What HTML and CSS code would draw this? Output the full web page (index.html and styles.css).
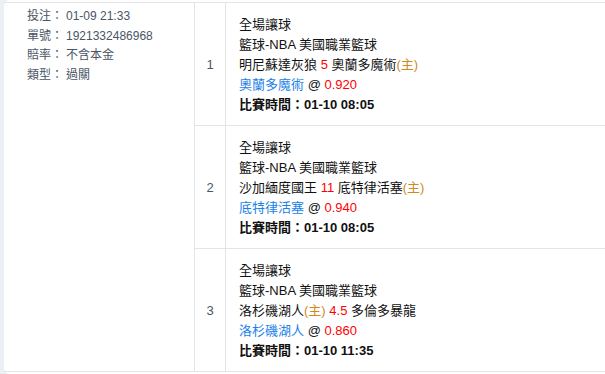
FILE: index.html
```html
<!DOCTYPE html>
<html lang="zh-Hant">
<head>
<meta charset="utf-8">
<link rel="stylesheet" href="styles.css">
</head>
<body>
<div class="page">
  <div class="card">
    <div class="grid">
      <div class="info">
        <div class="info-line"><span class="lbl">投注：</span>01-09 21:33</div>
        <div class="info-line"><span class="lbl">單號：</span>1921332486968</div>
        <div class="info-line"><span class="lbl">賠率：</span>不含本金</div>
        <div class="info-line"><span class="lbl">類型：</span>過關</div>
      </div>
      <div class="bets">
        <div class="bet">
          <div class="num">1</div>
          <div class="detail">
            <div class="line">全場讓球</div>
            <div class="line">籃球-NBA 美國職業籃球</div>
            <div class="line">明尼蘇達灰狼 <span class="red">5</span> 奧蘭多魔術<span class="home">(主)</span></div>
            <div class="line"><span class="blue">奧蘭多魔術</span> @ <span class="red">0.920</span></div>
            <div class="line bold">比賽時間：01-10 08:05</div>
          </div>
        </div>
        <div class="bet">
          <div class="num">2</div>
          <div class="detail">
            <div class="line">全場讓球</div>
            <div class="line">籃球-NBA 美國職業籃球</div>
            <div class="line">沙加緬度國王 <span class="red">11</span> 底特律活塞<span class="home">(主)</span></div>
            <div class="line"><span class="blue">底特律活塞</span> @ <span class="red">0.940</span></div>
            <div class="line bold">比賽時間：01-10 08:05</div>
          </div>
        </div>
        <div class="bet">
          <div class="num">3</div>
          <div class="detail">
            <div class="line">全場讓球</div>
            <div class="line">籃球-NBA 美國職業籃球</div>
            <div class="line">洛杉磯湖人<span class="home">(主)</span> <span class="red">4.5</span> 多倫多暴龍</div>
            <div class="line"><span class="blue">洛杉磯湖人</span> @ <span class="red">0.860</span></div>
            <div class="line bold">比賽時間：01-10 11:35</div>
          </div>
        </div>
      </div>
    </div>
  </div>
</div>
</body>
</html>
```

FILE: styles.css
```css
html, body {
  margin: 0;
  padding: 0;
  background: #ffffff;
}

body {
  font-family: "Liberation Sans", "Noto Sans CJK TC", sans-serif;
  font-size: 13px;
  color: #111;
}

.page {
  width: 605px;
  height: 374px;
  background: #eceff3;
  padding-left: 4px;
  box-sizing: border-box;
  display: flex;
  overflow: hidden;
}

.card {
  flex: 1;
  background: #fff;
  border-radius: 6px 0 0 6px;
  padding-top: 2px;
}

.grid {
  display: flex;
  border-top: 1px solid #e4e4ea;
  border-bottom: 1px solid #e4e4ea;
}

.info {
  border-right: 1px solid #e4e4e4;
  padding: 4px 0 0 23px;
  width: 167px;
  font-size: 12px;
  line-height: 19.6px;
  color: #4a5566;
}

.lbl {
  display: inline-block;
  width: 39px;
}

.bets {
  flex: 1;
  display: flex;
  flex-direction: column;
}

.bet {
  display: flex;
  height: 122px;
  border-bottom: 1px solid #e4e4e4;
}

.bet:last-child {
  border-bottom: none;
}

.num {
  width: 30px;
  border-right: 1px solid #e4e4e4;
  display: flex;
  align-items: center;
  justify-content: center;
  color: #4a5566;
  font-size: 13px;
}

.detail {
  flex: 1;
  padding: 12px 0 0 13px;
  line-height: 20px;
  color: #111;
}

.line {
  white-space: nowrap;
}

.red {
  color: #f00;
}

.blue {
  color: #1a7fe8;
}

.home {
  color: #cf8a1e;
}

.bold {
  font-weight: bold;
}
```
